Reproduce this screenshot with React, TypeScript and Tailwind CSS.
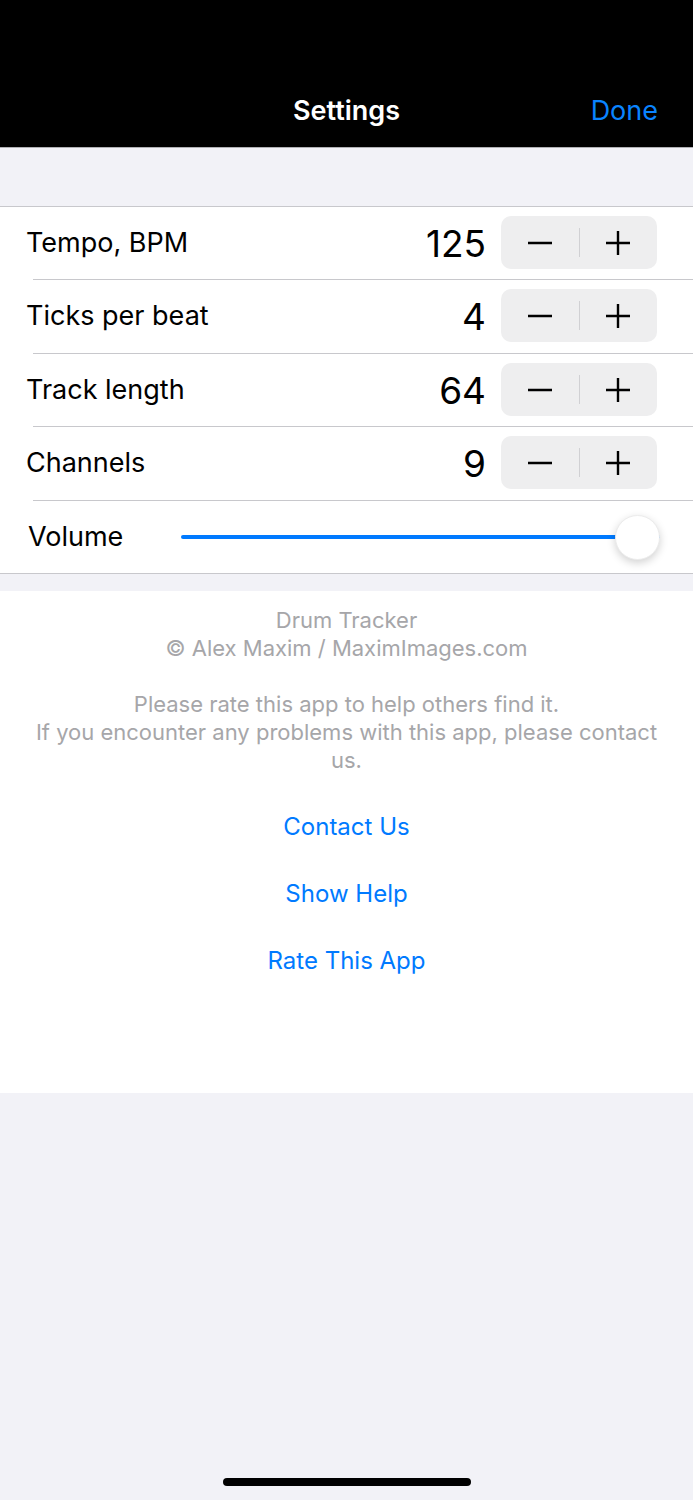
import React from "react";

const font = { fontFamily: "Inter, 'Noto Sans', 'Liberation Sans', sans-serif" };

function Stepper() {
  return (
    <div className="mt-[9px] flex h-[53px] w-[156px] items-center self-start rounded-[10px] bg-[#eeeeef]">
      <div className="flex h-full flex-1 items-center justify-center">
        <svg width="24" height="24" viewBox="0 0 24 24">
          <line x1="0.5" y1="12" x2="23.5" y2="12" stroke="#000" strokeWidth="2.4" strokeLinecap="round" />
        </svg>
      </div>
      <div className="h-[29px] w-px bg-[#d0d0d3]" />
      <div className="flex h-full flex-1 items-center justify-center">
        <svg width="24" height="24" viewBox="0 0 24 24">
          <line x1="0.5" y1="12" x2="23.5" y2="12" stroke="#000" strokeWidth="2.4" strokeLinecap="round" />
          <line x1="12" y1="0.5" x2="12" y2="23.5" stroke="#000" strokeWidth="2.4" strokeLinecap="round" />
        </svg>
      </div>
    </div>
  );
}

function Row({ label, value, h }: { label: string; value: string; h: string }) {
  return (
    <div className={`flex items-center pl-[26px] pr-[36px] ${h}`}>
      <div className="flex-1 text-[27px] text-black">{label}</div>
      <div className="mr-[15px] text-[37px] leading-none text-black">{value}</div>
      <Stepper />
    </div>
  );
}

function Sep() {
  return <div className="ml-[33px] h-px bg-[#c8c8cc]" />;
}

export default function App() {
  return (
    <div className="min-h-[1500px] w-[693px] bg-[#f2f2f7]" style={font}>
      <div className="flex h-[148px] flex-col border-b border-[#b0b0b4] bg-black">
        <div className="h-[90px]" />
        <div className="relative flex h-[42px] items-center justify-center">
          <span className="text-[27px] font-semibold text-white">Settings</span>
          <span className="absolute right-[35px] text-[27px] text-[#0a84ff]">Done</span>
        </div>
      </div>
      <div className="h-[58px]" />
      <div className="border-y border-[#c8c8cc] bg-white">
        <Row label="Tempo, BPM" value="125" h="h-[72px]" />
        <Sep />
        <Row label="Ticks per beat" value="4" h="h-[73px]" />
        <Sep />
        <Row label="Track length" value="64" h="h-[72px]" />
        <Sep />
        <Row label="Channels" value="9" h="h-[73px]" />
        <Sep />
        <div className="flex h-[72px] items-center pl-[28px] pr-[33px]">
          <div className="w-[153px] text-[27px] text-black">Volume</div>
          <div className="relative flex h-[45px] flex-1 items-center">
            <div className="h-[4px] flex-1 rounded-full bg-[#007aff]" />
            <div className="absolute right-0 top-0 h-[45px] w-[45px] rounded-full border border-[#ececec] bg-white shadow-[0_3px_8px_rgba(0,0,0,0.18)]" />
          </div>
        </div>
      </div>
      <div className="h-[17px]" />
      <div className="flex h-[502px] flex-col items-center bg-white pt-[15px] text-center">
        <div className="text-[22px] leading-[28px] text-[#a6a6a9]">
          <div>Drum Tracker</div>
          <div>© Alex Maxim / MaximImages.com</div>
          <div className="h-[28px]" />
          <div className="whitespace-nowrap">Please rate this app to help others find it.</div>
          <div className="whitespace-nowrap">If you encounter any problems with this app, please contact</div>
          <div>us.</div>
        </div>
        <div className="mt-[19px] flex flex-col items-center text-[24px] text-[#007aff]">
          <div className="flex h-[67px] items-center">Contact Us</div>
          <div className="flex h-[67px] items-center">Show Help</div>
          <div className="flex h-[67px] items-center">Rate This App</div>
        </div>
      </div>
      <div className="flex h-[407px] flex-col items-center">
        <div className="mt-[385px] h-[8px] w-[248px] rounded-full bg-black" />
      </div>
    </div>
  );
}
